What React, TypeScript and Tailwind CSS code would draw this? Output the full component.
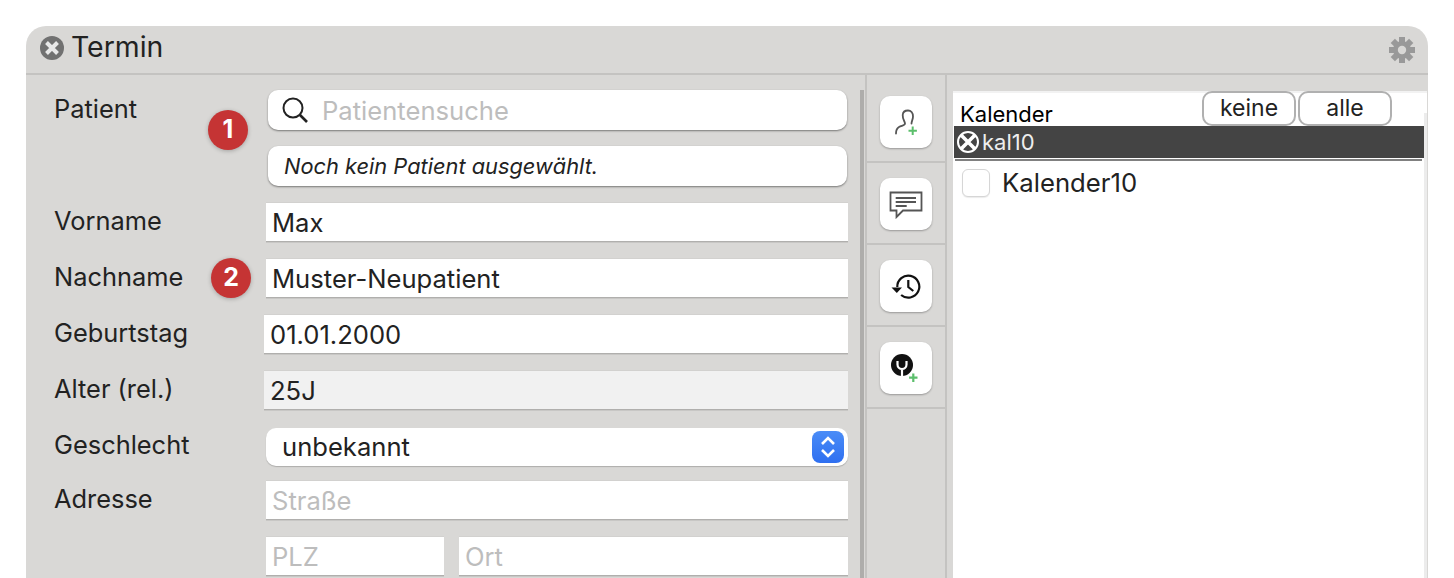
import { ReactNode } from "react";

const fieldClass =
  "h-10 bg-white border-t border-t-[#d2d1cf] border-b border-b-[#b0afad] shadow-[0_1px_0_#c8c7c5] flex items-center pl-[6px] pt-[3px] text-[25.6px] text-[#222]";

const Label = ({ children }: { children: ReactNode }) => (
  <div className="w-[210px] shrink-0 text-[25.4px] leading-[38px] text-[#222]">{children}</div>
);

const Row = ({ label, children, offset }: { label: string; children: ReactNode; offset: string }) => (
  <div className="flex h-10">
    <Label>{label}</Label>
    <div className={`flex-1 ${offset}`}>{children}</div>
  </div>
);

const Badge = ({ n, className }: { n: number; className: string }) => (
  <div
    className={`absolute w-10 h-10 rounded-full bg-[#c53434] text-white font-bold text-[25px] flex items-center justify-center shadow-[0_1px_4px_rgba(0,0,0,0.25)] ${className}`}
  >
    {n}
  </div>
);

const ToolCell = ({ children, first }: { children: ReactNode; first?: boolean }) => (
  <div className={`${first ? "h-[88px] pt-[21px]" : "h-[82px] pt-[15px]"} border-b-2 border-[#c4c3c1] flex justify-center`}>
    <div className="w-[52px] h-[52px] bg-white rounded-[10px] shadow-[0_1px_2px_rgba(0,0,0,0.3)]">{children}</div>
  </div>
);

const Gear = () => (
  <svg width="28" height="28" viewBox="0 0 28 28" className="mt-1">
    <circle cx="14" cy="14" r="9" fill="#999" />
    {[0, 45, 90, 135, 180, 225, 270, 315].map((deg) => (
      <rect key={deg} x="11" y="1" width="6" height="6" fill="#999" transform={`rotate(${deg} 14 14)`} />
    ))}
    <circle cx="14" cy="14" r="4.200" fill="#d9d8d6" />
  </svg>
);

export default function App() {
  return (
    <div
      className="h-[578px] overflow-hidden bg-white pt-[26px] pl-[26px] pr-[26px]"
      style={{ fontFamily: "Inter, 'Liberation Sans', sans-serif" }}
    >
      <div className="bg-[#d9d8d6] rounded-t-[20px] h-[600px] flex flex-col">
        {/* title bar */}
        <div className="h-[49px] shrink-0 border-b-2 border-[#c4c3c1] flex items-center pb-1 pl-[14px] pr-[12px]">
          <svg width="24" height="24" viewBox="0 0 24 24">
            <circle cx="12" cy="12" r="12" fill="#717171" />
            <path d="M6.500 6.500l11 11M17.500 6.500l-11 11" stroke="#e8e8e8" strokeWidth="4" />
          </svg>
          <div className="ml-[7px] text-[28.4px] text-[#222] flex-1">Termin</div>
          <Gear />
        </div>

        <div className="flex flex-1 min-h-0">
          {/* form */}
          <div className="relative w-[839px] shrink-0 pl-[28px] pt-[15px] pr-[17px] flex flex-col gap-4">
            <Row label="Patient" offset="ml-[4px]">
              <div className="h-10 bg-white rounded-[10px] shadow-[0_1px_2px_rgba(0,0,0,0.45)] flex items-center pl-[14px] mr-[1px]">
                <svg width="26" height="26" viewBox="0 0 26 26" fill="none" stroke="#222">
                  <circle cx="11" cy="11" r="9.500" strokeWidth="2" />
                  <path d="M18 18l7 7" strokeWidth="2.600" />
                </svg>
                <span className="ml-[14px] pt-[3px] text-[25.6px] text-[#bdbdbd]">Patientensuche</span>
              </div>
            </Row>
            <Row label="" offset="ml-[4px]">
              <div className="h-10 bg-white rounded-[10px] shadow-[0_1px_2px_rgba(0,0,0,0.45)] flex items-center pl-[16px] pt-[1px] mr-[1px] italic text-[21.8px] text-[#222]">
                Noch kein Patient ausgewählt.
              </div>
            </Row>
            <Row label="Vorname" offset="ml-[2px]">
              <div className={fieldClass}>Max</div>
            </Row>
            <Row label="Nachname" offset="ml-[2px]">
              <div className={fieldClass}>Muster-Neupatient</div>
            </Row>
            <Row label="Geburtstag" offset="">
              <div className={fieldClass}>01.01.2000</div>
            </Row>
            <Row label="Alter (rel.)" offset="">
              <div className={`${fieldClass} !bg-[#f1f1f1]`}>25J</div>
            </Row>
            <div className="flex h-[38px] mt-[2px] -mb-[2px]">
              <div className="w-[210px] shrink-0 text-[25.4px] leading-[34px] text-[#222]">Geschlecht</div>
              <div className="flex-1 ml-[2px] bg-white rounded-[10px] shadow-[0_1px_1px_rgba(0,0,0,0.2)] flex items-center justify-between pl-[16px] pr-[4px] text-[25.6px] text-[#222]">
                unbekannt
                <div className="w-8 h-8 rounded-[8px] bg-gradient-to-b from-[#4a8cf7] to-[#2f6ff0] flex items-center justify-center">
                  <svg width="18" height="26" viewBox="0 0 18 26" fill="none" stroke="white" strokeWidth="2.600">
                    <path d="M3 10l6-6 6 6M3 16l6 6 6-6" />
                  </svg>
                </div>
              </div>
            </div>
            <div className="flex h-10">
              <div className="w-[210px] shrink-0 text-[25.4px] leading-[38px] text-[#222]">Adresse</div>
              <div className={`flex-1 ml-[2px] ${fieldClass} !text-[#bdbdbd]`}>Straße</div>
            </div>
            <div className="flex h-10 pl-[212px] gap-[15px]">
              <div className={`w-[178px] ${fieldClass} !text-[#bdbdbd]`}>PLZ</div>
              <div className={`flex-1 ${fieldClass} !text-[#bdbdbd]`}>Ort</div>
            </div>

            <Badge n={1} className="left-[182px] top-[35px]" />
            <Badge n={2} className="left-[185px] top-[183px]" />
            {/* scrollbar */}
            <div className="absolute right-[1px] top-[15px] bottom-0 w-1 bg-[#aeadab]" />
          </div>

          {/* toolbar */}
          <div className="w-[82px] shrink-0 border-x-2 border-[#c4c3c1] flex flex-col">
            <ToolCell first>
              <svg width="52" height="52" viewBox="0 0 52 52" fill="none">
                <path
                  d="M16 37.500c0-3 .5-5 3-6.500 3-1.500 6-1.500 6-3.500s-2.500-4-2.300-8.500c.2-3 2.300-4.500 5.300-4.500s5 2.500 5 6c0 3-1.500 4.500-1.500 7"
                  stroke="#555"
                  strokeWidth="1.800"
                  strokeLinecap="round"
                />
                <path d="M32.700 30.500v8.400M28.500 34.700h8.400" stroke="#5cbf6c" strokeWidth="2" />
              </svg>
            </ToolCell>
            <ToolCell>
              <svg width="52" height="52" viewBox="0 0 52 52" fill="none" stroke="#555" strokeWidth="1.800">
                <path d="M10.500 14.500h31v18H23l-6.500 6.500v-6.500h-6z" />
                <path d="M15.700 20h20.300M15.700 24h20.300M15.700 28h11" />
              </svg>
            </ToolCell>
            <ToolCell>
              <svg width="52" height="52" viewBox="0 0 52 52" fill="none" stroke="#111" strokeWidth="2.200">
                <path d="M17.300 27a11 11 0 1 1 3.800 8" />
                <path d="M11.500 27.500h10.500l-5.200 5.500z" fill="#111" stroke="none" />
                <path d="M28.300 20v7l5 4" />
              </svg>
            </ToolCell>
            <ToolCell>
              <svg width="52" height="52" viewBox="0 0 52 52" fill="none">
                <circle cx="22" cy="23" r="11" fill="#111" />
                <path d="M17.500 19v3.500a4.500 4.500 0 0 0 9 0V19M22 27v7" stroke="white" strokeWidth="2.200" />
                <path d="M33.300 31.500v8.400M29.100 35.700h8.400" stroke="#5cbf6c" strokeWidth="2.200" />
              </svg>
            </ToolCell>
          </div>

          {/* calendar list */}
          <div className="flex-1 pl-[6px] pt-[16px] pr-[1px]">
            <div className="relative bg-white h-full border-t-2 border-[#f2f2f2] pl-[1px] pr-[3px]">
              <div className="h-[33px] pl-[6px] pt-[8px] text-[22px] leading-[27px] text-black">Kalender</div>
              <div className="absolute left-[249px] top-[-2px] flex gap-[2px]">
                <div className="w-[94px] h-[35px] border-2 border-[#b0b0b0] rounded-[10px] flex items-center justify-center text-[23px] text-[#222]">keine</div>
                <div className="w-[94px] h-[35px] border-2 border-[#b0b0b0] rounded-[10px] flex items-center justify-center text-[23px] text-[#222]">alle</div>
              </div>
              <div className="h-[32px] bg-[#444] flex items-center pl-[3px] text-[22px] text-[#eee]">
                <svg width="22" height="22" viewBox="0 0 22 22" fill="none" stroke="white">
                  <circle cx="11" cy="11" r="10" strokeWidth="2" />
                  <path d="M4 4l14 14M18 4L4 18" strokeWidth="3.600" />
                </svg>
                <span className="ml-[3px]">kal10</span>
              </div>
              <div className="mt-[1px] ml-[1px] mr-[2px] h-[2px] bg-[#808080]" />
              <div className="flex items-center pl-[8px] mt-[3px]">
                <div className="w-[28px] h-[28px] rounded-[6px] bg-white border border-[#d6d6d6] shadow-[0_1px_1px_rgba(0,0,0,0.08)]" />
                <span className="ml-[12px] text-[25.7px] text-[#222]">Kalender10</span>
              </div>
              <div className="absolute right-0 top-[20px] bottom-0 w-[3px] bg-[#ececec]" />
            </div>
          </div>
        </div>
      </div>
    </div>
  );
}
